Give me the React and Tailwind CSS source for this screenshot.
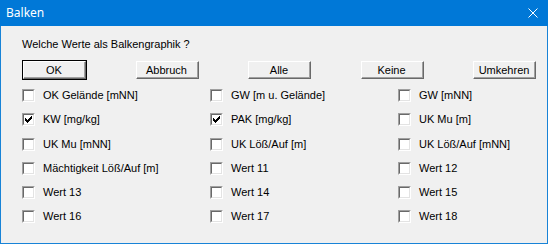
import React, { useState } from "react";

const items = [
  ["OK Gelände [mNN]", false],
  ["GW [m u. Gelände]", false],
  ["GW [mNN]", false],
  ["KW [mg/kg]", true],
  ["PAK [mg/kg]", true],
  ["UK Mu [m]", false],
  ["UK Mu [mNN]", false],
  ["UK Löß/Auf [m]", false],
  ["UK Löß/Auf [mNN]", false],
  ["Mächtigkeit Löß/Auf [m]", false],
  ["Wert 11", false],
  ["Wert 12", false],
  ["Wert 13", false],
  ["Wert 14", false],
  ["Wert 15", false],
  ["Wert 16", false],
  ["Wert 17", false],
  ["Wert 18", false],
];

// classic 3D push button
const Button = ({ label, isDefault }) => (
  <div className={isDefault ? "border border-[#000000]" : "border border-transparent"}>
    <div className="w-[63px] h-[18px] border-t border-l border-white border-r border-b border-r-[#696969] border-b-[#696969]">
      <div className="h-full flex items-center justify-center border-r border-b border-[#a0a0a0] bg-[#f0f0f0] text-black">
        {label}
      </div>
    </div>
  </div>
);

const CheckBox = ({ checked }) => (
  <div className="w-[13px] h-[13px] border-t border-l border-[#a0a0a0] border-r border-b border-r-white border-b-white shrink-0">
    <div className="w-full h-full border-t border-l border-[#696969] border-r border-b border-r-[#e3e3e3] border-b-[#e3e3e3] bg-white flex items-center justify-center">
      {checked && (
        <svg width="7" height="7" viewBox="0 0 7 7" shapeRendering="crispEdges">
          <path d="M0 2h1v3H0zM1 3h1v3H1zM2 4h1v3H2zM3 3h1v3H3zM4 2h1v3H4zM5 1h1v3H5zM6 0h1v3H6z" fill="#000" />
        </svg>
      )}
    </div>
  </div>
);

export default function App() {
  const [checks, setChecks] = useState(items.map((i) => i[1]));

  return (
    <div className="w-[550px] h-[245px] bg-white">
      <div className="w-[548px] h-[244px] flex flex-col border-l border-r border-b border-[#1883d7] bg-[#f0f0f0]" style={{ fontFamily: '"Liberation Sans", Arial, sans-serif' }}>
        {/* title bar */}
        <div className="h-[26px] -mx-px bg-[#0078d7] flex items-center justify-between pl-[6px] pr-[10px]">
          <span className="text-white text-[12px]" style={{ fontFamily: '"Noto Sans", "Open Sans", sans-serif' }}>
            Balken
          </span>
          <svg width="10" height="10" viewBox="0 0 10 10">
            <path d="M0.5 0.5L9.5 9.5M9.5 0.5L0.5 9.5" stroke="#fff" strokeWidth="1" />
          </svg>
        </div>

        <div className="pl-[21px] pr-[10px] text-[11px] leading-[14px] text-black">
          <p className="mt-[11px]">Welche Werte als Balkengraphik ?</p>

          <div className="mt-[9px] w-[515px] flex justify-between">
            <Button label="OK" isDefault />
            <Button label="Abbruch" />
            <Button label="Alle" />
            <Button label="Keine" />
            <Button label="Umkehren" />
          </div>

          <div className="mt-[9px] grid grid-cols-[188px_188px_140px] auto-rows-[24.3px]">
            {items.map(([label], i) => (
              <label
                key={label}
                className="flex items-start gap-[8px] cursor-default"
                onClick={() => setChecks((c) => c.map((v, j) => (j === i ? !v : v)))}
              >
                <CheckBox checked={checks[i]} />
                <span className="mt-[-1px]">{label}</span>
              </label>
            ))}
          </div>
        </div>
      </div>
    </div>
  );
}
